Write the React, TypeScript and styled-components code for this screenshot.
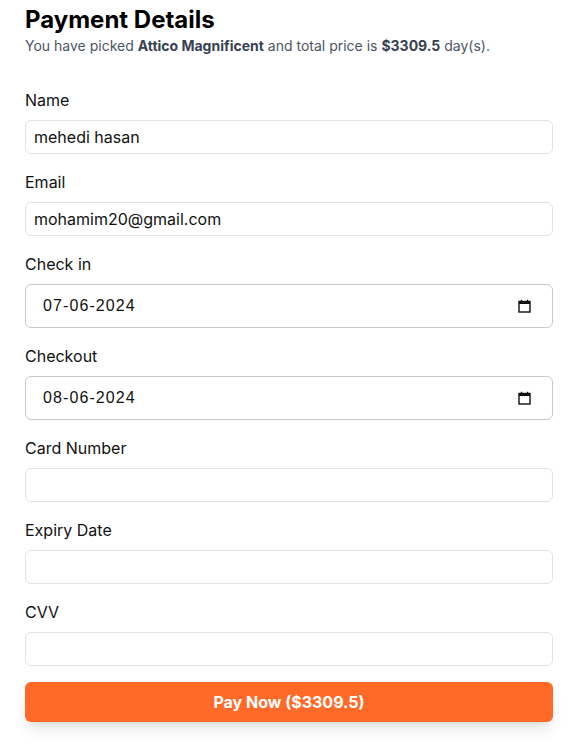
import styled, { createGlobalStyle } from 'styled-components';

const GlobalStyle = createGlobalStyle`
  body {
    margin: 0;
    background: #ffffff;
    font-family: 'Inter', 'Liberation Sans', sans-serif;
    color: #111111;
  }
`;

const Page = styled.div`
  width: 528px;
  padding: 4px 22px 30px 25px;
`;

const Title = styled.h2`
  margin: 0;
  font-size: 24px;
  line-height: 32px;
  font-weight: 700;
  color: #000000;
`;

const Subtitle = styled.p`
  margin: 0 0 32px;
  font-size: 14px;
  line-height: 20px;
  color: #4b5563;

  b {
    color: #374151;
    font-weight: 700;
  }
`;

const Form = styled.form`
  display: flex;
  flex-direction: column;
  gap: 16px;
`;

const Field = styled.div`
  display: flex;
  flex-direction: column;
  gap: 8px;
`;

const Label = styled.label`
  font-size: 16px;
  line-height: 24px;
  color: #111111;
`;

const TextInput = styled.input`
  box-sizing: border-box;
  width: 100%;
  height: 34px;
  padding: 0 8px;
  border: 1px solid #e2e2e2;
  border-radius: 6px;
  font-family: 'Inter', sans-serif;
  font-size: 16px;
  color: #111111;
  outline: none;
`;

const DateBox = styled.div`
  box-sizing: border-box;
  display: flex;
  align-items: center;
  height: 44px;
  padding: 0 21px 0 17px;
  border: 1px solid #c8c8c8;
  border-radius: 6px;
`;

const DateText = styled.input`
  flex: 1;
  border: none;
  outline: none;
  padding: 0;
  font-family: 'Liberation Sans', Arial, sans-serif;
  font-size: 16px;
  letter-spacing: 1.1px;
  color: #111111;
  background: transparent;
`;

const PayButton = styled.button`
  height: 40px;
  border: none;
  border-radius: 6px;
  background: #ff6a28;
  color: #ffffff;
  font-family: 'Inter', sans-serif;
  font-size: 16px;
  font-weight: 700;
  box-shadow: 0 10px 15px -3px rgba(0, 0, 0, 0.1), 0 4px 6px -4px rgba(0, 0, 0, 0.1);
  cursor: pointer;
`;

const CalendarIcon = () => (
  <svg width="13" height="14" viewBox="0 0 13 14" aria-hidden="true">
    <rect x="1" y="2.5" width="11" height="10.5" fill="none" stroke="#111" strokeWidth="1.4" />
    <rect x="1" y="2.5" width="11" height="2.5" fill="#111" />
    <rect x="2.8" y="0.8" width="1.3" height="2" fill="#111" />
    <rect x="8.9" y="0.8" width="1.3" height="2" fill="#111" />
  </svg>
);

function DateField({ label, value }: { label: string; value: string }) {
  return (
    <Field>
      <Label>{label}</Label>
      <DateBox>
        <DateText type="text" defaultValue={value} />
        <CalendarIcon />
      </DateBox>
    </Field>
  );
}

function TextField({ label, value, type = 'text' }: { label: string; value?: string; type?: string }) {
  return (
    <Field>
      <Label>{label}</Label>
      <TextInput type={type} defaultValue={value} />
    </Field>
  );
}

export default function App() {
  return (
    <>
      <GlobalStyle />
      <Page>
        <Title>Payment Details</Title>
        <Subtitle>
          You have picked <b>Attico Magnificent</b> and total price is <b>$3309.5</b> day(s).
        </Subtitle>
        <Form onSubmit={(e) => e.preventDefault()}>
          <TextField label="Name" value="mehedi hasan" />
          <TextField label="Email" value="mohamim20@gmail.com" type="email" />
          <DateField label="Check in" value="07-06-2024" />
          <DateField label="Checkout" value="08-06-2024" />
          <TextField label="Card Number" />
          <TextField label="Expiry Date" />
          <TextField label="CVV" />
          <PayButton type="submit">Pay Now ($3309.5)</PayButton>
        </Form>
      </Page>
    </>
  );
}
